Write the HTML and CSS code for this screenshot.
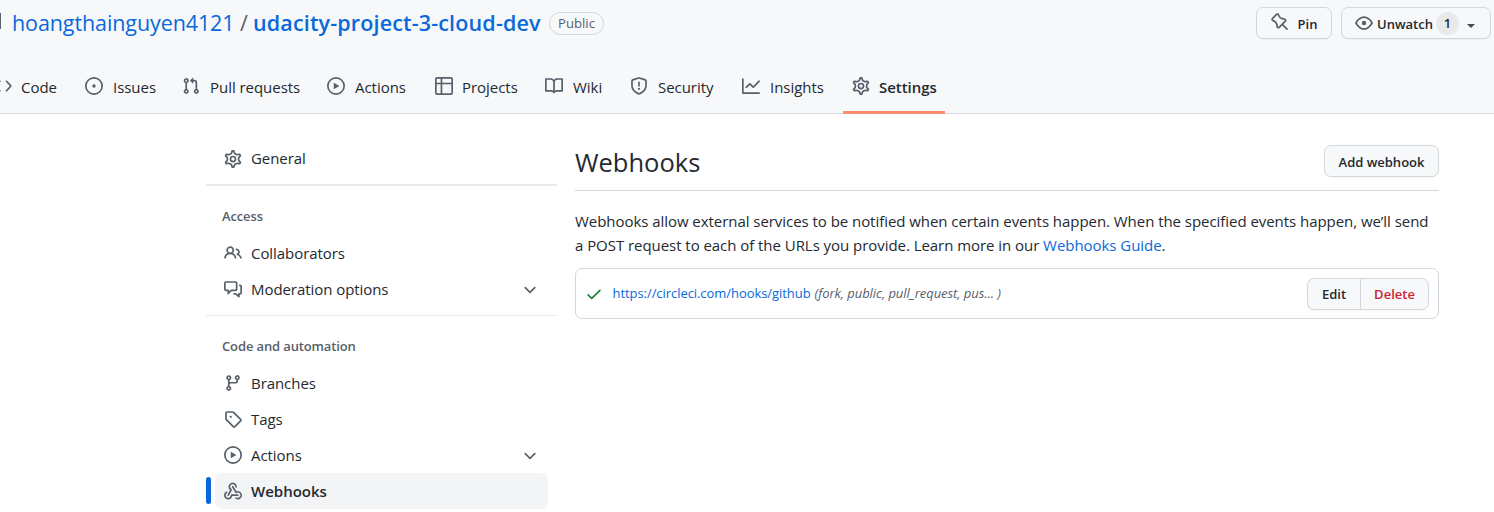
FILE: index.html
```html
<!DOCTYPE html>
<html lang="en">
<head>
<meta charset="utf-8">
<title>Webhooks</title>
<link rel="stylesheet" href="styles.css">
</head>
<body>
<svg class="sprite" aria-hidden="true">
  <symbol id="code" viewBox="0 0 16 16"><path fill="none" stroke="currentColor" stroke-width="1.5" stroke-linecap="round" stroke-linejoin="round" d="M5.2 3.8L1.4 8l3.800 4.200M11.2 3.8L15 8l-3.8 4.2"/></symbol>
  <symbol id="issue" viewBox="0 0 16 16"><path fill-rule="evenodd" d="M8 9.5a1.5 1.5 0 100-3 1.5 1.5 0 000 3zM8 0a8 8 0 100 16A8 8 0 008 0zM1.5 8a6.5 6.5 0 1113 0 6.5 6.5 0 01-13 0z"/></symbol>
  <symbol id="pull" viewBox="0 0 16 16"><path fill-rule="evenodd" d="M7.177 3.073L9.573.677A.25.25 0 0110 .854v4.792a.25.25 0 01-.427.177L7.177 3.427a.25.25 0 010-.354zM3.75 2.5a.75.75 0 100 1.5.75.75 0 000-1.5zm-2.25.75a2.25 2.25 0 113 2.122v5.256a2.251 2.251 0 11-1.5 0V5.372A2.25 2.25 0 011.5 3.25zM11 2.5h-1V4h1a1 1 0 011 1v5.628a2.251 2.251 0 101.5 0V5A2.5 2.5 0 0011 2.5zm1 10.25a.75.75 0 111.5 0 .75.75 0 01-1.5 0zM3.75 12a.75.75 0 100 1.5.75.75 0 000-1.5z"/></symbol>
  <symbol id="play" viewBox="0 0 16 16"><path fill-rule="evenodd" d="M1.5 8a6.5 6.5 0 1113 0 6.5 6.5 0 01-13 0zM8 0a8 8 0 100 16A8 8 0 008 0zM6.379 5.227A.25.25 0 006 5.442v5.117a.25.25 0 00.379.214l4.264-2.559a.25.25 0 000-.428L6.379 5.227z"/></symbol>
  <symbol id="table" viewBox="0 0 16 16"><path fill-rule="evenodd" d="M0 1.75C0 .784.784 0 1.75 0h12.5C15.216 0 16 .784 16 1.75v12.5A1.75 1.75 0 0114.25 16H1.75A1.75 1.75 0 010 14.25V1.75zM1.5 6.5v7.75c0 .138.112.25.25.25H5v-8H1.5zM6.5 6.5v8h7.75a.25.25 0 00.25-.25V6.5h-8zM14.5 5V1.75a.25.25 0 00-.25-.25H6.5V5h8zM5 5V1.5H1.75a.25.25 0 00-.25.25V5H5z"/></symbol>
  <symbol id="book" viewBox="0 0 16 16"><path fill-rule="evenodd" d="M0 1.75A.75.75 0 01.75 1h4.253c1.227 0 2.317.59 3 1.501A3.744 3.744 0 0111.006 1h4.245a.75.75 0 01.75.75v10.5a.75.75 0 01-.75.75h-4.507a2.25 2.25 0 00-1.591.659l-.622.621a.75.75 0 01-1.06 0l-.622-.621A2.25 2.25 0 005.258 13H.75a.75.75 0 01-.75-.75V1.75zm8.755 3a2.25 2.25 0 012.25-2.25H14.5v9h-3.757c-.71 0-1.4.201-1.992.572l.004-7.322zm-1.504 7.324l.004-5.073-.002-2.253A2.25 2.25 0 005.003 2.5H1.5v9h3.757a3.75 3.75 0 011.994.574z"/></symbol>
  <symbol id="shield" viewBox="0 0 16 16"><path fill-rule="evenodd" d="M7.467.133a1.75 1.75 0 011.066 0l5.25 1.68A1.75 1.75 0 0115 3.48V7c0 1.566-.32 3.182-1.303 4.682-.983 1.498-2.585 2.813-5.032 3.855a1.7 1.7 0 01-1.33 0c-2.447-1.042-4.049-2.357-5.032-3.855C1.32 10.182 1 8.566 1 7V3.48a1.75 1.75 0 011.217-1.667l5.25-1.68zm.61 1.429a.25.25 0 00-.153 0l-5.25 1.68a.25.25 0 00-.174.238V7c0 1.358.275 2.666 1.057 3.86.784 1.194 2.121 2.34 4.366 3.297a.2.2 0 00.154 0c2.245-.956 3.582-2.104 4.366-3.298C13.225 9.666 13.5 8.36 13.5 7V3.48a.25.25 0 00-.174-.237l-5.25-1.68zM9 10.5a1 1 0 11-2 0 1 1 0 012 0zm-.25-5.75a.75.75 0 10-1.5 0v3a.75.75 0 001.5 0v-3z"/></symbol>
  <symbol id="graph" viewBox="0 0 16 16"><path fill-rule="evenodd" d="M1.5 1.75a.75.75 0 00-1.5 0v12.5c0 .414.336.75.75.75h14.5a.75.75 0 000-1.5H1.5V1.75zm14.28 2.53a.75.75 0 00-1.06-1.06L10 7.94 7.53 5.47a.75.75 0 00-1.06 0L3.22 8.72a.75.75 0 001.06 1.06L7 7.06l2.47 2.47a.75.75 0 001.06 0l5.25-5.25z"/></symbol>
  <symbol id="gear" viewBox="0 0 16 16"><g fill="none" stroke="currentColor"><path stroke-width="1.35" transform="translate(8 8) scale(1.115) translate(-8 -8)" d="M7.429 1.525a6.593 6.593 0 011.142 0c.036.003.108.036.137.146l.289 1.105c.147.56.55.967.997 1.189.174.086.341.183.501.29.417.278.97.423 1.53.27l1.102-.303c.11-.03.175.016.195.046.219.31.41.641.573.989.014.031.022.11-.059.19l-.815.806c-.411.406-.562.957-.53 1.456a4.588 4.588 0 010 .582c-.032.499.119 1.05.53 1.456l.815.806c.08.08.073.159.059.19a6.494 6.494 0 01-.573.99c-.02.029-.086.074-.195.045l-1.103-.303c-.559-.153-1.112-.008-1.529.27-.16.107-.327.204-.5.29-.449.222-.851.628-.998 1.189l-.289 1.105c-.029.11-.101.143-.137.146a6.613 6.613 0 01-1.142 0c-.036-.003-.108-.037-.137-.146l-.289-1.105c-.147-.56-.55-.967-.997-1.189a4.502 4.502 0 01-.501-.29c-.417-.278-.97-.423-1.53-.27l-1.102.303c-.11.03-.175-.016-.195-.046a6.492 6.492 0 01-.573-.989c-.014-.031-.022-.11.059-.19l.815-.806c.411-.406.562-.957.53-1.456a4.587 4.587 0 010-.582c.032-.499-.119-1.05-.53-1.456l-.815-.806c-.08-.08-.073-.159-.059-.19a6.44 6.44 0 01.573-.99c.02-.029.086-.075.195-.045l1.103.303c.559.153 1.112.008 1.529-.27.16-.107.327-.204.5-.29.449-.222.851-.628.998-1.189l.289-1.105c.029-.11.101-.143.137-.146z"/><circle cx="8" cy="8" r="2.25" stroke-width="1.5"/></g></symbol>
  <symbol id="people" viewBox="0 0 16 16"><path fill-rule="evenodd" d="M5.5 3.5a2 2 0 100 4 2 2 0 000-4zM2 5.5a3.5 3.5 0 115.898 2.549 5.507 5.507 0 013.034 4.084.75.75 0 11-1.482.235 4.001 4.001 0 00-7.9 0 .75.75 0 01-1.482-.236A5.507 5.507 0 013.102 8.05 3.49 3.49 0 012 5.5zM11 4a.75.75 0 100 1.5 1.5 1.5 0 01.666 2.844.75.75 0 00-.416.672v.352a.75.75 0 00.574.73c1.2.289 2.162 1.2 2.522 2.372a.75.75 0 101.434-.44 5.01 5.01 0 00-2.56-3.012A3 3 0 0011 4z"/></symbol>
  <symbol id="talk" viewBox="0 0 16 16"><path fill="none" stroke="currentColor" stroke-width="1.5" stroke-linecap="round" stroke-linejoin="round" d="M1.75 1.75h8.5q1 0 1 1v5.5q0 1-1 1H6.5L3.75 12V9.250h-2q-1 0-1-1v-5.500q0-1 1-1zM14 4.750h.25q1 0 1 1v5.500q0 1-1 1h-1V14.800L10.500 12.250H9"/></symbol>
  <symbol id="branch" viewBox="0 0 16 16"><path fill-rule="evenodd" d="M11.75 2.5a.75.75 0 100 1.5.75.75 0 000-1.5zm-2.25.75a2.25 2.25 0 113 2.122V6A2.5 2.5 0 0110 8.5H6a1 1 0 00-1 1v1.128a2.251 2.251 0 11-1.5 0V5.372a2.25 2.25 0 111.5 0v1.836A2.492 2.492 0 016 7h4a1 1 0 001-1v-.628A2.25 2.25 0 019.5 3.25zM4.25 12a.75.75 0 100 1.5.75.75 0 000-1.5zM3.5 3.25a.75.75 0 111.5 0 .75.75 0 01-1.5 0z"/></symbol>
  <symbol id="tag" viewBox="0 0 16 16"><path fill-rule="evenodd" d="M2.5 7.775V2.75a.25.25 0 01.25-.25h5.025a.25.25 0 01.177.073l6.25 6.25a.25.25 0 010 .354l-5.025 5.025a.25.25 0 01-.354 0l-6.25-6.25a.25.25 0 01-.073-.177zm-1.5 0V2.75C1 1.784 1.784 1 2.75 1h5.025c.464 0 .91.184 1.238.513l6.25 6.25a1.75 1.75 0 010 2.474l-5.026 5.026a1.75 1.75 0 01-2.474 0l-6.25-6.25A1.75 1.75 0 011 7.775zM6 5a1 1 0 100 2 1 1 0 000-2z"/></symbol>
  <symbol id="hook" viewBox="0 0 16 16"><path d="M5.5 4.25a2.25 2.25 0 014.5 0 .75.75 0 001.5 0 3.75 3.75 0 10-6.14 2.889l-2.272 4.258a.75.75 0 001.324.706L7 7.25a.75.75 0 00-.309-1.015A2.25 2.25 0 015.5 4.25z"/><path d="M7.364 3.607a.75.75 0 011.03.257l2.608 4.349a3.75 3.75 0 11-.628 6.785.75.75 0 01.752-1.299 2.25 2.25 0 10-.033-3.88.75.75 0 01-1.03-.256L7.107 4.636a.75.75 0 01.257-1.03z"/><path d="M2.9 8.776A.75.75 0 012.625 9.8 2.25 2.25 0 106 11.75a.75.75 0 01.75-.751h5.5a.75.75 0 010 1.5H7.425a3.751 3.751 0 11-5.55-3.998.75.75 0 011.024.274z"/></symbol>
  <symbol id="eye" viewBox="0 0 16 16"><path fill-rule="evenodd" d="M1.679 7.932c.412-.621 1.242-1.75 2.366-2.717C5.175 4.242 6.527 3.5 8 3.5c1.473 0 2.824.742 3.955 1.715 1.124.967 1.954 2.096 2.366 2.717a.119.119 0 010 .136c-.412.621-1.242 1.75-2.366 2.717C10.825 11.758 9.473 12.5 8 12.5c-1.473 0-2.824-.742-3.955-1.715C2.92 9.818 2.09 8.69 1.679 8.068a.119.119 0 010-.136zM8 2c-1.981 0-3.67.992-4.933 2.078C1.797 5.169.88 6.423.43 7.1a1.619 1.619 0 000 1.798c.45.678 1.367 1.932 2.637 3.024C4.329 13.008 6.019 14 8 14c1.981 0 3.67-.992 4.933-2.078 1.27-1.091 2.187-2.345 2.637-3.023a1.619 1.619 0 000-1.798c-.45-.678-1.367-1.932-2.637-3.023C11.671 2.992 9.981 2 8 2zm0 8a2 2 0 100-4 2 2 0 000 4z"/></symbol>
  <symbol id="pin" viewBox="0 0 16 16"><path fill-rule="evenodd" d="M4.456.734a1.75 1.75 0 012.826.504l.613 1.327a3.081 3.081 0 002.084 1.707l2.454.584c1.332.317 1.8 1.972.832 2.94L11.06 10l3.72 3.72a.75.75 0 11-1.061 1.06L10 11.06l-2.204 2.205c-.968.968-2.623.5-2.94-.832l-.584-2.454a3.081 3.081 0 00-1.707-2.084l-1.327-.613a1.75 1.75 0 01-.504-2.826L4.456.734zM5.92 1.866a.25.25 0 00-.404-.072L1.794 5.516a.25.25 0 00.072.404l1.328.613A4.582 4.582 0 015.73 9.63l.584 2.454a.25.25 0 00.42.12l5.47-5.47a.25.25 0 00-.12-.42L9.63 5.73a4.581 4.581 0 01-3.098-2.537L5.92 1.866z"/></symbol>
  <symbol id="check" viewBox="0 0 16 16"><path d="M13.78 4.22a.75.75 0 010 1.06l-7.25 7.25a.75.75 0 01-1.06 0L2.22 9.28a.75.75 0 011.06-1.06L6 10.94l6.72-6.72a.75.75 0 011.06 0z"/></symbol>
  <symbol id="chevron" viewBox="0 0 16 16"><path d="M12.78 6.22a.75.75 0 010 1.06l-4.25 4.25a.75.75 0 01-1.06 0L3.22 7.28a.75.75 0 011.06-1.06L8 9.940l3.720-3.720a.75.75 0 011.060 0z"/></symbol>
</svg>

<header class="header">
  <div class="title-row">
    <span class="repo-edge"></span>
    <a class="owner">hoangthainguyen4121</a>
    <span class="slash">/</span>
    <a class="repo">udacity-project-3-cloud-dev</a>
    <span class="badge">Public</span>
    <div class="repo-actions">
      <button class="btn btn-pin"><svg class="icon"><use href="#pin"/></svg><span>Pin</span></button>
      <button class="btn btn-watch"><svg class="icon"><use href="#eye"/></svg><span class="watch-label">Unwatch</span><span class="count">1</span><span class="caret"></span></button>
    </div>
  </div>
  <nav class="tabs">
    <a class="tab"><svg class="icon"><use href="#code"/></svg><span>Code</span></a>
    <a class="tab tab-loose"><svg class="icon"><use href="#issue"/></svg><span>Issues</span></a>
    <a class="tab tab-loose tab-pull"><svg class="icon"><use href="#pull"/></svg><span>Pull requests</span></a>
    <a class="tab tab-loose"><svg class="icon"><use href="#play"/></svg><span>Actions</span></a>
    <a class="tab"><svg class="icon"><use href="#table"/></svg><span>Projects</span></a>
    <a class="tab tab-loose"><svg class="icon"><use href="#book"/></svg><span>Wiki</span></a>
    <a class="tab tab-loose tab-pull"><svg class="icon"><use href="#shield"/></svg><span>Security</span></a>
    <a class="tab tab-loose tab-pull"><svg class="icon"><use href="#graph"/></svg><span>Insights</span></a>
    <a class="tab tab-active"><svg class="icon"><use href="#gear"/></svg><span>Settings</span></a>
  </nav>
</header>

<div class="layout">
  <aside class="sidebar">
    <a class="item"><svg class="icon"><use href="#gear"/></svg><span class="label-general">General</span></a>
    <div class="divider divider-thick"></div>
    <h3 class="group">Access</h3>
    <a class="item"><svg class="icon"><use href="#people"/></svg><span>Collaborators</span></a>
    <a class="item"><svg class="icon"><use href="#talk"/></svg><span>Moderation options</span><svg class="icon chevron"><use href="#chevron"/></svg></a>
    <div class="divider"></div>
    <h3 class="group">Code and automation</h3>
    <a class="item"><svg class="icon"><use href="#branch"/></svg><span>Branches</span></a>
    <a class="item"><svg class="icon"><use href="#tag"/></svg><span>Tags</span></a>
    <a class="item"><svg class="icon"><use href="#play"/></svg><span>Actions</span><svg class="icon chevron"><use href="#chevron"/></svg></a>
    <a class="item item-active"><svg class="icon"><use href="#hook"/></svg><span>Webhooks</span></a>
  </aside>
  <main class="main">
    <div class="subhead">
      <h2 class="heading">Webhooks</h2>
      <button class="btn btn-add">Add webhook</button>
    </div>
    <p class="intro"><span class="line">Webhooks allow external services to be notified when certain events happen. When the specified events happen, we’ll send</span> <span class="line">a POST request to each of the URLs you provide. Learn more in our <a class="link">Webhooks Guide</a>.</span></p>
    <div class="hook">
      <svg class="icon check"><use href="#check"/></svg>
      <a class="link hook-url">https://circleci.com/hooks/github</a>
      <em class="hook-events">(fork, public, pull_request, pus… )</em>
      <div class="group-btns"><button class="btn btn-edit">Edit</button><button class="btn btn-delete">Delete</button></div>
    </div>
  </main>
</div>
</body>
</html>
```
FILE: styles.css
```css
* { box-sizing: border-box; }
body {
  margin: 0;
  height: 512px;
  overflow: hidden;
  background: #fff;
  color: #24292f;
  font: 15px/24px "Open Sans", "Noto Sans", sans-serif;
}
.sprite { display: none; }
.icon { width: 18px; height: 18px; flex: none; fill: currentColor; color: #57606a; }
h2, h3, p { margin: 0; font-weight: 400; }
.link { color: #0969da; }
span, a, em { white-space: nowrap; }

.header { height: 114px; background: #f6f8fa; border-bottom: 1px solid #d0d7de; }
.title-row { display: flex; align-items: center; height: 46px; font-size: 21.5px; line-height: 32px; }
.repo-edge { width: 1px; height: 16px; margin: 0 11px 4px 0; background: #57606a; }
.owner { width: 223px; color: #0969da; letter-spacing: -.1px; }
.slash { width: 17px; padding-left: 5px; color: #57606a; }
.repo { width: 288px; margin-left: 1px; color: #0969da; font-weight: 600; letter-spacing: .15px; }
.badge {
  width: 55px; height: 23px; margin-left: 8px;
  border: 1px solid #d0d7de; border-radius: 12px;
  color: #57606a; font-size: 13.2px; font-weight: 500; line-height: 21px; text-align: center;
}
.repo-actions { display: flex; gap: 9px; margin: 0 3px 0 auto; }

.btn {
  display: flex; align-items: center; justify-content: center;
  height: 32px; padding: 1px 0 0;
  border: 1px solid #d5d8da; border-radius: 7px;
  background: #f6f8fa; box-shadow: 0 1px 0 rgba(27, 31, 36, .04);
  color: #24292f; font: 550 13px/20px "Open Sans", "Noto Sans", sans-serif;
}
.btn-pin { width: 76px; gap: 9px; }
.btn-pin .icon { margin-bottom: 3px; }
.btn-watch { width: 150px; justify-content: flex-start; padding-left: 13px; }
.btn-watch .icon { margin: 0 4px 2px 0; }
.watch-label { width: 55px; }
.count { width: 23px; height: 23px; margin: 0 0 1px 4px; border-radius: 12px; background: #e7e9eb; line-height: 23px; text-align: center; }
.caret { margin: 4px 0 0 8px; border: 4.5px solid transparent; border-top-color: #444b52; border-bottom: 0; }

.tabs {
  display: grid;
  grid-template-columns: 91px 98px 144px 108px 110px 86px 112px 109px 102px;
  height: 68px; margin-left: -15px; padding-top: 15px;
}
.tab { display: flex; align-items: center; gap: 9px; padding-left: 9px; border-bottom: 3px solid transparent; letter-spacing: -.04px; }
.tab span { padding-top: 2px; }
.tab-loose { gap: 10px; }
.tab-pull { margin-left: -1px; }
.tab-active { border-bottom-color: #fd8c73; border-radius: 1px; font-weight: 600; }

.layout { display: flex; gap: 18px; padding: 27px 55px 0 206px; }
.sidebar { width: 351px; }
.item { display: flex; align-items: center; gap: 9px; height: 36px; margin: 0 9px; padding: 0 9px; border-radius: 7px; letter-spacing: -.06px; }
.label-general { padding-bottom: 2px; }
.chevron { margin-left: auto; }
.divider { height: 1px; margin: 8px 0 18px; background: #e6eaee; }
.divider-thick { height: 2px; margin: 7px 0 18px; }
.group { height: 25px; margin-bottom: 6px; padding-left: 16px; color: #57606a; font-size: 13px; font-weight: 600; letter-spacing: -.13px; }
.item-active { position: relative; background: #f3f4f6; font-weight: 600; letter-spacing: 0; }
.item-active::before { content: ""; position: absolute; left: -9px; top: 4px; width: 5px; height: 27px; border-radius: 4px; background: #0969da; }

.main { width: 864px; padding-top: 4px; }
.subhead { display: flex; justify-content: space-between; height: 46px; border-bottom: 1px solid #d0d7de; }
.heading { font-size: 25.5px; line-height: 34px; }
.btn-add { width: 115px; }
.intro { margin-top: 18px; letter-spacing: -.048px; }
.line { display: block; }
.hook { display: flex; align-items: center; height: 51px; margin-top: 11px; padding: 0 9px; border: 1px solid #d0d7de; border-radius: 7px; font-size: 13px; letter-spacing: -.06px; }
.check { color: #1a7f37; }
.hook-url { margin-left: 9.5px; padding-bottom: 2px; }
.hook-events { margin-left: 4px; padding-bottom: 2px; color: #57606a; }
.group-btns { display: flex; margin-left: auto; }
.btn-edit { width: 53px; border-radius: 7px 0 0 7px; border-right: 0; }
.btn-delete { width: 69px; border-radius: 0 7px 7px 0; color: #cf222e; }
```
